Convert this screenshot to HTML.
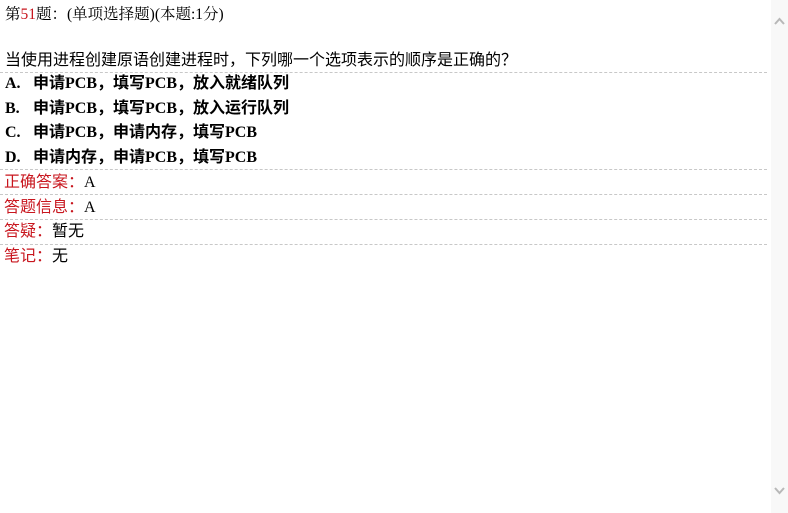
<!DOCTYPE html>
<html><head><meta charset="utf-8"><style>
html,body{margin:0;padding:0;width:788px;height:513px;overflow:hidden;background:#fff;}
body{font-family:"Liberation Serif","Noto Serif CJK SC",serif;color:#000;position:relative;}
.l{position:absolute;left:5px;white-space:nowrap;font-size:16px;line-height:20px;}
.t{font-size:15.5px;top:5px;}
.q{font-family:"Liberation Sans","Noto Sans CJK SC",sans-serif;top:51px;}
.o{font-weight:bold;font-family:"Liberation Serif","Noto Sans CJK SC",sans-serif;font-size:16px;}
.o b{display:inline-block;width:28px;}
.r{color:#c8161e;font-family:"Liberation Sans","Noto Sans CJK SC",sans-serif;font-size:16px;}
.r span{color:#000;font-family:"Liberation Serif","Noto Sans CJK SC",serif;}
.d{position:absolute;left:0;width:767px;height:0;border-top:1px dashed #c8c8c8;}
.sb{position:absolute;left:771px;top:0;width:17px;height:513px;background:#f8f8f8;}
</style></head><body>
<div class="l t">第<span style="color:#c8161e">51</span>题：(单项选择题)(本题:1分)</div>
<div class="l q">当使用进程创建原语创建进程时，下列哪一个选项表示的顺序是正确的？</div>
<div class="d" style="top:72px"></div>
<div class="l o" style="top:74px"><b>A.</b>申请PCB，填写PCB，放入就绪队列</div>
<div class="l o" style="top:99px"><b>B.</b>申请PCB，填写PCB，放入运行队列</div>
<div class="l o" style="top:123px"><b>C.</b>申请PCB，申请内存，填写PCB</div>
<div class="l o" style="top:148px"><b>D.</b>申请内存，申请PCB，填写PCB</div>
<div class="d" style="top:169px"></div>
<div class="l r" style="left:4px;top:173px">正确答案：<span>A</span></div>
<div class="d" style="top:194px"></div>
<div class="l r" style="left:4px;top:198px">答题信息：<span>A</span></div>
<div class="d" style="top:219px"></div>
<div class="l r" style="left:4px;top:222px">答疑：<span>暂无</span></div>
<div class="d" style="top:244px"></div>
<div class="l r" style="left:4px;top:247px">笔记：<span>无</span></div>
<div class="sb">
<svg width="17" height="513" style="position:absolute;left:0;top:0">
<path d="M4 24 L8.5 19 L13 24" stroke="#b8b8b8" stroke-width="2" fill="none"/>
<path d="M4 488 L8.5 493 L13 488" stroke="#b8b8b8" stroke-width="2" fill="none"/>
</svg></div>
</body></html>
